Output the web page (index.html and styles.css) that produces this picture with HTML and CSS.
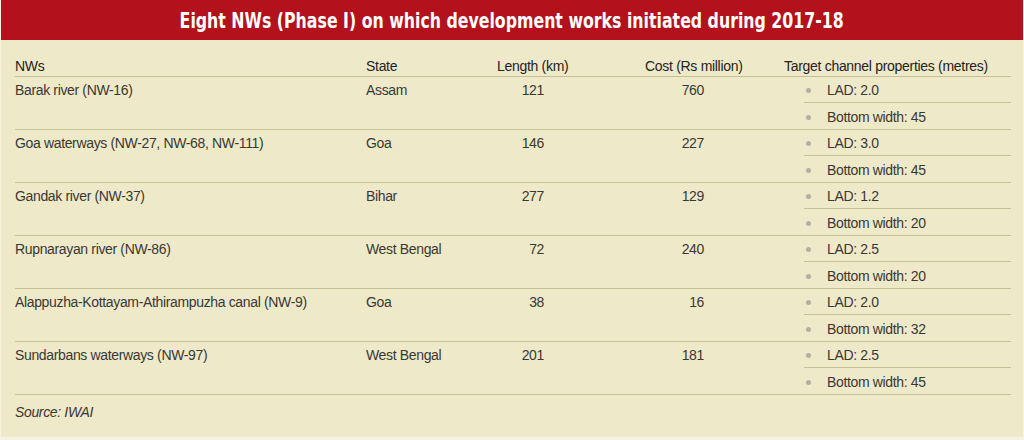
FILE: index.html
```html
<!DOCTYPE html>
<html lang="en">
<head>
<meta charset="utf-8">
<title>Eight NWs (Phase I)</title>
<link rel="stylesheet" href="styles.css">
</head>
<body>
<div class="panel">
  <div class="banner"><h1 class="title">Eight NWs (Phase I) on which development works initiated during 2017-18</h1></div>
  <div class="table">
    <div class="row head">
      <div class="cell">NWs</div>
      <div class="cell">State</div>
      <div class="cell">Length (km)</div>
      <div class="cell">Cost (Rs million)</div>
      <div class="cell">Target channel properties (metres)</div>
    </div>
    <div class="row">
      <div class="cell">Barak river (NW-16)</div>
      <div class="cell">Assam</div>
      <div class="cell num len">121</div>
      <div class="cell num cost">760</div>
      <div class="cell props"><div class="prop"><span class="dot"></span>LAD: 2.0</div><div class="prop"><span class="dot"></span>Bottom width: 45</div></div>
    </div>
    <div class="row">
      <div class="cell">Goa waterways (NW-27, NW-68, NW-111)</div>
      <div class="cell">Goa</div>
      <div class="cell num len">146</div>
      <div class="cell num cost">227</div>
      <div class="cell props"><div class="prop"><span class="dot"></span>LAD: 3.0</div><div class="prop"><span class="dot"></span>Bottom width: 45</div></div>
    </div>
    <div class="row">
      <div class="cell">Gandak river (NW-37)</div>
      <div class="cell">Bihar</div>
      <div class="cell num len">277</div>
      <div class="cell num cost">129</div>
      <div class="cell props"><div class="prop"><span class="dot"></span>LAD: 1.2</div><div class="prop"><span class="dot"></span>Bottom width: 20</div></div>
    </div>
    <div class="row">
      <div class="cell">Rupnarayan river (NW-86)</div>
      <div class="cell">West Bengal</div>
      <div class="cell num len">72</div>
      <div class="cell num cost">240</div>
      <div class="cell props"><div class="prop"><span class="dot"></span>LAD: 2.5</div><div class="prop"><span class="dot"></span>Bottom width: 20</div></div>
    </div>
    <div class="row">
      <div class="cell">Alappuzha-Kottayam-Athirampuzha canal (NW-9)</div>
      <div class="cell">Goa</div>
      <div class="cell num len">38</div>
      <div class="cell num cost">16</div>
      <div class="cell props"><div class="prop"><span class="dot"></span>LAD: 2.0</div><div class="prop"><span class="dot"></span>Bottom width: 32</div></div>
    </div>
    <div class="row">
      <div class="cell">Sundarbans waterways (NW-97)</div>
      <div class="cell">West Bengal</div>
      <div class="cell num len">201</div>
      <div class="cell num cost">181</div>
      <div class="cell props"><div class="prop"><span class="dot"></span>LAD: 2.5</div><div class="prop"><span class="dot"></span>Bottom width: 45</div></div>
    </div>
  </div>
  <div class="source">Source: IWAI</div>
</div>
</body>
</html>
```

FILE: styles.css
```css
html, body {
  margin: 0;
  padding: 0;
  background: #f6f3e2;
}
.panel {
  width: 1022px;
  height: 437px;
  margin-left: 1px;
  background: #eee9c9;
  font-family: "Liberation Sans", Arial, sans-serif;
  font-size: 14px;
  letter-spacing: -0.35px;
  color: #3a3834;
  overflow: hidden;
}
.banner {
  height: 40px;
  background: #b3111b;
  display: flex;
  align-items: center;
  justify-content: center;
}
.title {
  margin: 0;
  padding-top: 3px;
  color: #ffffff;
  font-family: "DejaVu Sans Condensed", "DejaVu Sans", sans-serif;
  font-stretch: condensed;
  font-weight: bold;
  font-size: 21px;
  letter-spacing: 0;
  line-height: 37px;
  white-space: nowrap;
  transform: scaleX(0.835);
}
.table {
  margin-left: 14px;
  width: 996px;
}
.row {
  display: grid;
  grid-template-columns: 351px 131px 148px 139px 227px;
  border-bottom: 1px solid #c6bf98;
  line-height: 25px;
}
.cell {
  padding-top: 1px;
}
.head .cell {
  padding-top: 0;
}
.head {
  padding-top: 16px;
  line-height: 20px;
  color: #24231f;
  letter-spacing: -0.3px;
}
.num {
  text-align: right;
}
.len {
  padding-right: 101px;
}
.cost {
  padding-right: 80px;
}
.cell.props {
  padding-top: 0;
  padding-left: 20px;
}
.prop {
  display: flex;
  align-items: center;
  box-sizing: border-box;
  height: 26px;
  padding-top: 2px;
  border-bottom: 1px solid #c6bf98;
}
.prop + .prop {
  height: 26px;
  border-bottom: none;
}
.dot {
  width: 5px;
  height: 5px;
  border-radius: 50%;
  background: #b2b0a6;
  margin-left: 2px;
  margin-right: 16px;
  flex: none;
}
.source {
  margin-left: 14px;
  padding-top: 7px;
  line-height: 20px;
  font-style: italic;
}
```
